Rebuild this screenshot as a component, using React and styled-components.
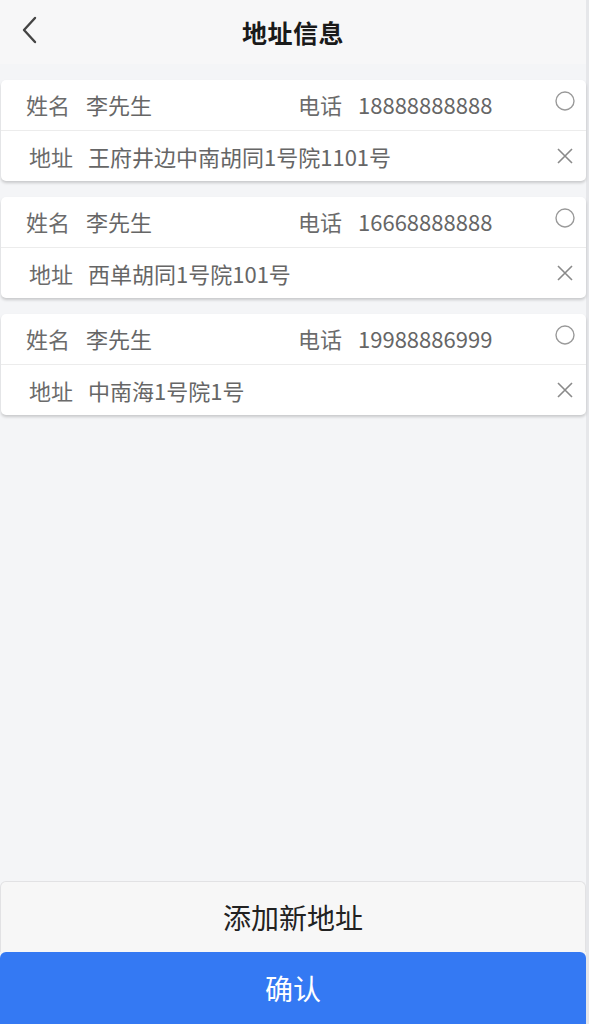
import React from "react";
import styled, { createGlobalStyle } from "styled-components";

const GlobalStyle = createGlobalStyle`
  html, body {
    margin: 0;
    padding: 0;
    background: #f4f5f7;
  }
  body {
    font-family: "Noto Sans CJK SC", "Noto Sans", "Liberation Sans", sans-serif;
  }
  * {
    box-sizing: border-box;
  }
`;

const Page = styled.div`
  display: flex;
  flex-direction: column;
  width: 589px;
  height: 1024px;
  border-right: 3px solid #e6e7ea;
  background: #f4f5f7;
`;

const Header = styled.div`
  position: relative;
  display: flex;
  align-items: center;
  justify-content: center;
  height: 64px;
  background: #f7f7f8;
`;

const BackButton = styled.button`
  position: absolute;
  left: 14px;
  top: 14px;
  display: flex;
  align-items: center;
  justify-content: center;
  width: 32px;
  height: 32px;
  padding: 0;
  border: none;
  background: transparent;
`;

const Title = styled.h1`
  margin: 0;
  font-size: 25px;
  font-weight: 700;
  color: #1a1a1a;
  letter-spacing: 0.5px;
`;

const List = styled.div`
  flex: 1;
  display: flex;
  flex-direction: column;
  gap: 16px;
  padding: 16px 0 0 1px;
`;

const Card = styled.div`
  display: flex;
  flex-direction: column;
  background: #fff;
  border-radius: 5px;
  box-shadow: 0 2px 3px rgba(0, 0, 0, 0.18);
  overflow: hidden;
`;

const Row = styled.div`
  display: flex;
  align-items: center;
  height: ${(p) => (p.$top ? "51px" : "50px")};
  padding: 0 0 ${(p) => (p.$top ? "2px" : "0")} ${(p) => (p.$indent ? "28px" : "25px")};
  border-bottom: ${(p) => (p.$top ? "1px solid #ececec" : "none")};
  font-size: 22px;
  color: #666;
`;

const Label = styled.span`
  color: #6b6b6b;
  margin-right: ${(p) => p.$gap || "16px"};
  white-space: nowrap;
`;

const Value = styled.span`
  color: #666;
  white-space: nowrap;
  width: ${(p) => p.$w || "auto"};
`;

const IconSlot = styled.div`
  margin-left: auto;
  width: 40px;
  display: flex;
  align-items: center;
  justify-content: center;
  margin-right: 1px;
  margin-top: ${(p) => p.$up || "0"};
`;

const Footer = styled.div`
  display: flex;
  flex-direction: column;
`;

const AddButton = styled.button`
  height: 71px;
  border: 1px solid #e2e2e4;
  border-bottom: none;
  border-radius: 6px 6px 0 0;
  background: #f7f7f7;
  color: #222;
  font-family: inherit;
  font-size: 28px;
`;

const ConfirmButton = styled.button`
  height: 72px;
  border: none;
  border-radius: 6px 6px 0 0;
  background: #3479f3;
  color: #fff;
  font-family: inherit;
  font-size: 28px;
`;

const addresses = [
  { name: "李先生", phone: "18888888888", addr: "王府井边中南胡同1号院1101号" },
  { name: "李先生", phone: "16668888888", addr: "西单胡同1号院101号" },
  { name: "李先生", phone: "19988886999", addr: "中南海1号院1号" },
];

const Circle = () => (
  <svg width="22" height="22" viewBox="0 0 22 22">
    <circle cx="11" cy="11" r="9" fill="none" stroke="#9a9a9a" strokeWidth="1.4" />
  </svg>
);

const Cross = () => (
  <svg width="18" height="18" viewBox="0 0 18 18">
    <path d="M2 2 L16 16 M16 2 L2 16" stroke="#8a8a8a" strokeWidth="1.6" fill="none" />
  </svg>
);

const Chevron = () => (
  <svg width="20" height="30" viewBox="0 0 20 30">
    <path d="M15 3 L4 15 L15 27" stroke="#444" strokeWidth="2.4" fill="none" strokeLinecap="round" strokeLinejoin="round" />
  </svg>
);

export default function App() {
  return (
    <>
      <GlobalStyle />
      <Page>
        <Header>
          <BackButton>
            <Chevron />
          </BackButton>
          <Title>地址信息</Title>
        </Header>
        <List>
          {addresses.map((a, i) => (
            <Card key={i}>
              <Row $top>
                <Label>姓名</Label>
                <Value $w="212px">{a.name}</Value>
                <Label>电话</Label>
                <Value>{a.phone}</Value>
                <IconSlot $up="-6px">
                  <Circle />
                </IconSlot>
              </Row>
              <Row $indent>
                <Label $gap="15px">地址</Label>
                <Value>{a.addr}</Value>
                <IconSlot>
                  <Cross />
                </IconSlot>
              </Row>
            </Card>
          ))}
        </List>
        <Footer>
          <AddButton>添加新地址</AddButton>
          <ConfirmButton>确认</ConfirmButton>
        </Footer>
      </Page>
    </>
  );
}
